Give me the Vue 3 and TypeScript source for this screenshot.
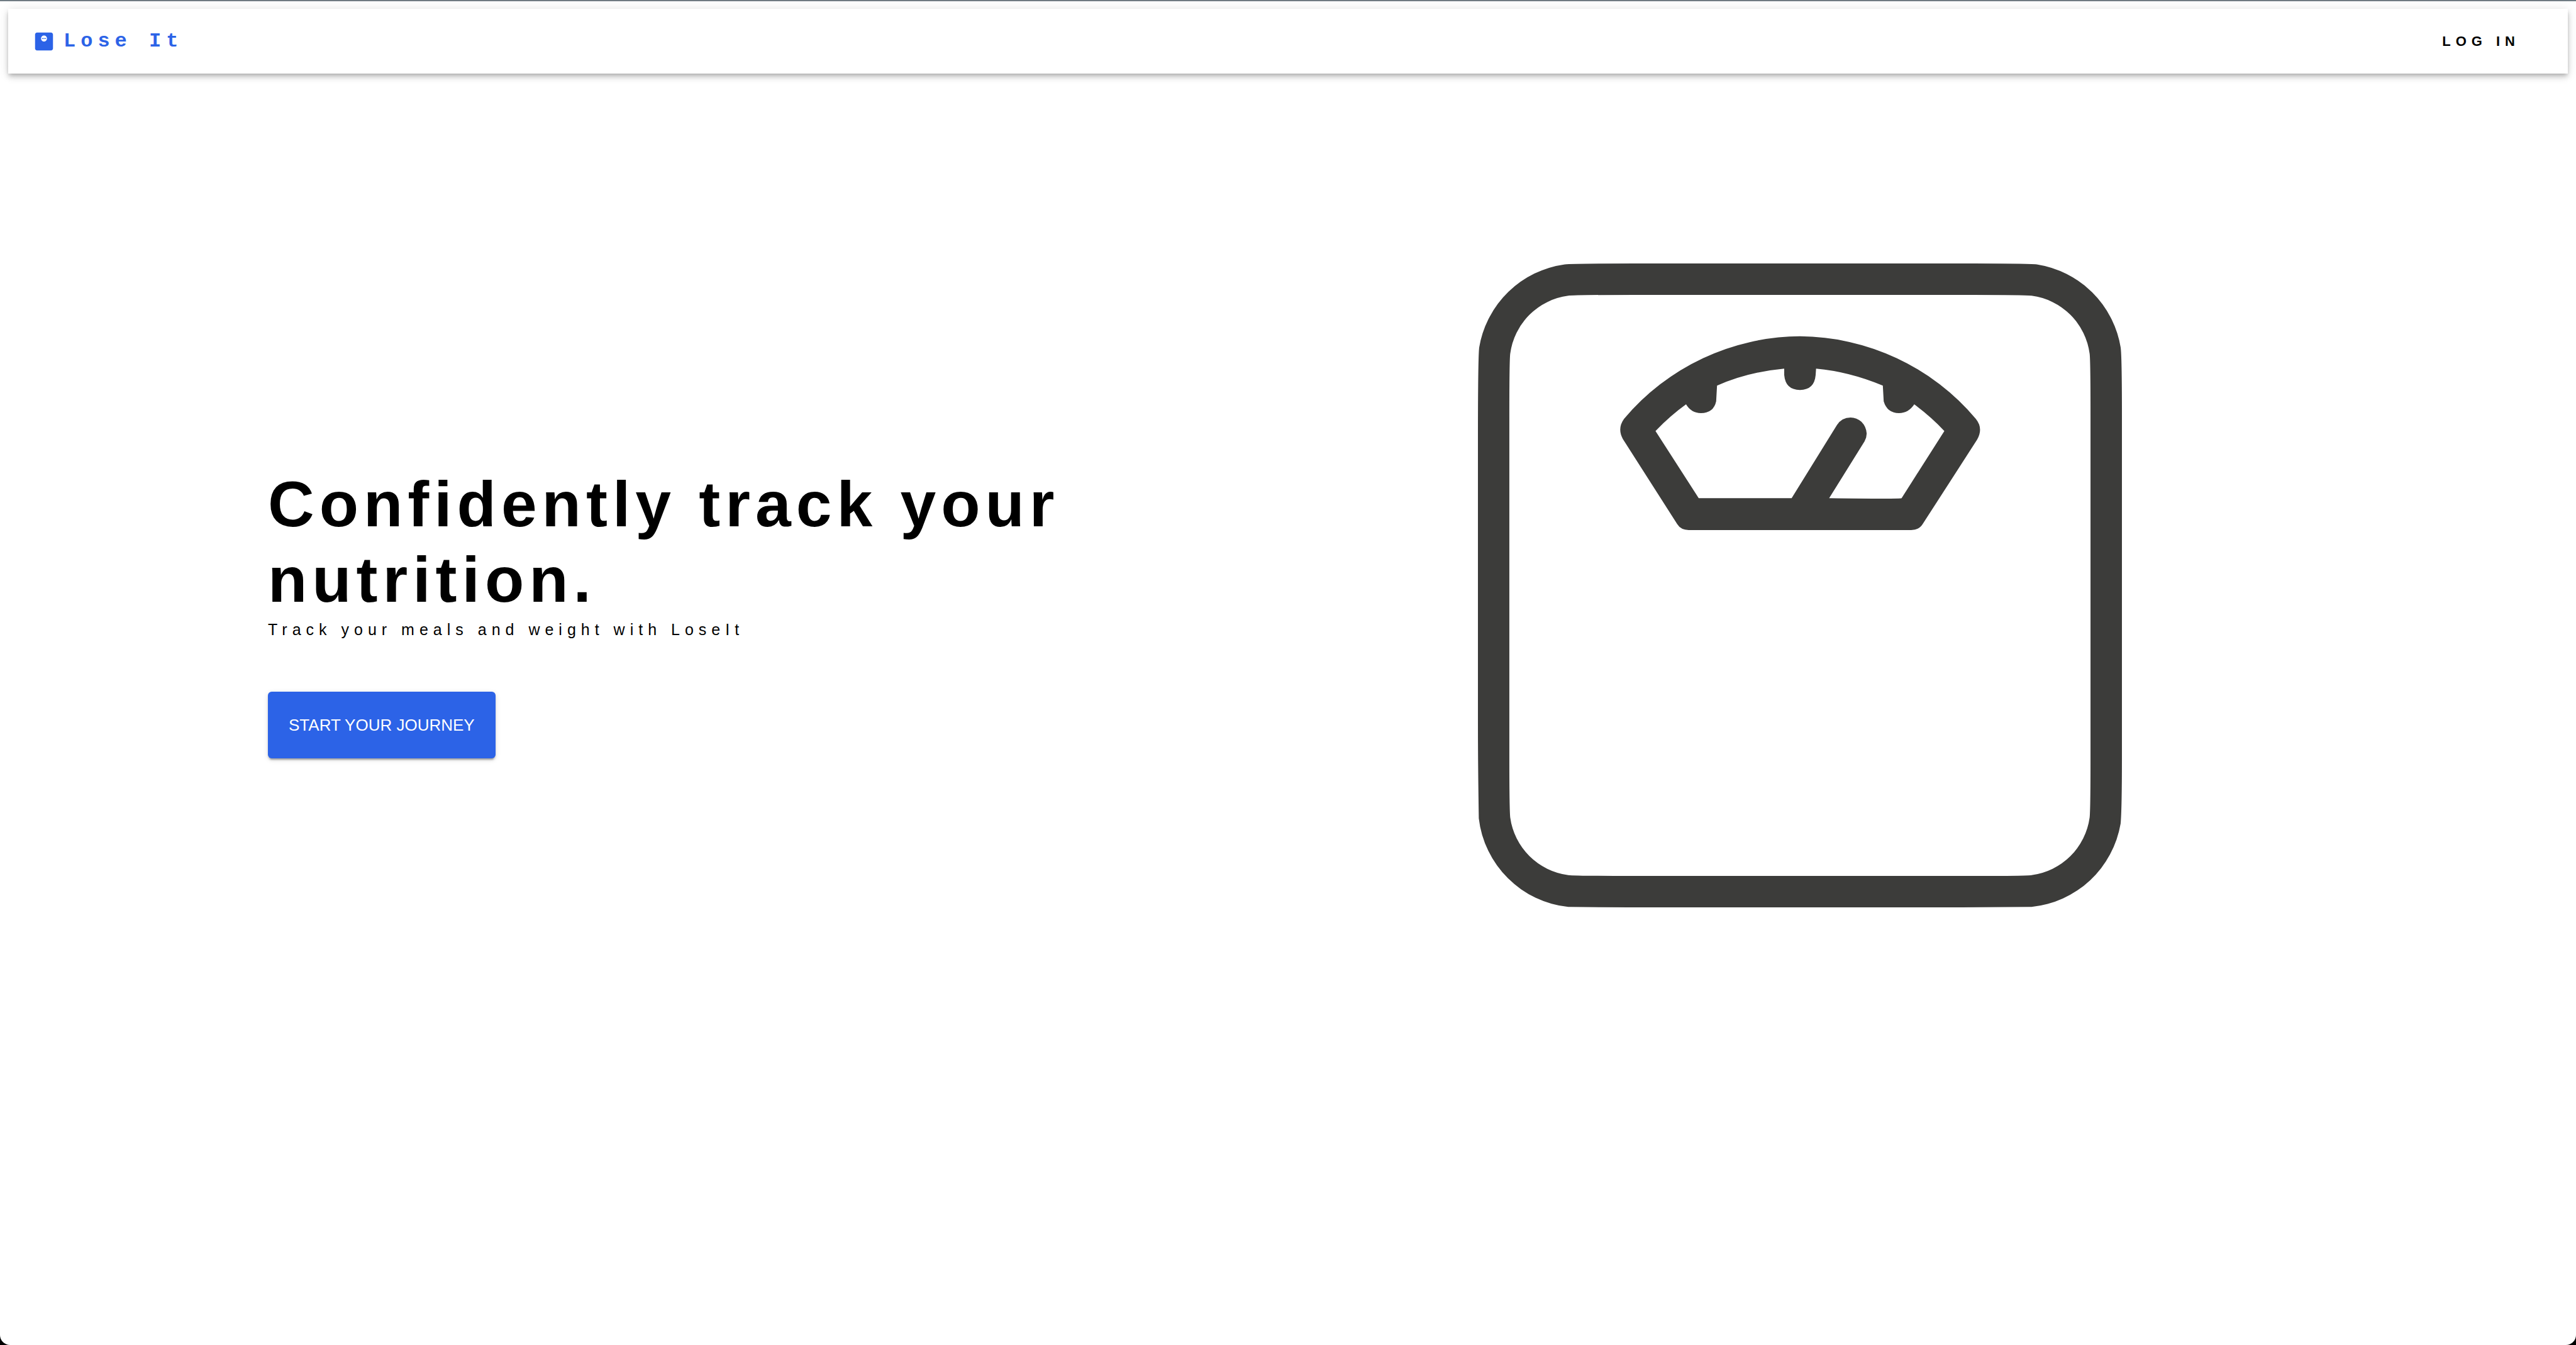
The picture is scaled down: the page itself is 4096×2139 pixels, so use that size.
<script setup lang="ts">
interface NavLink {
  label: string
  href: string
}

const brand: string = 'Lose It'
const links: NavLink[] = [{ label: 'LOG IN', href: '#login' }]
const headline: string = 'Confidently track your nutrition.'
const tagline: string = 'Track your meals and weight with LoseIt'
const action: string = 'START YOUR JOURNEY'
</script>

<template>
  <div class="page">
    <header class="bar">
      <a class="brand" href="#home">
        <svg class="brand-icon" viewBox="0 0 24 24" aria-hidden="true">
          <path
            fill="currentColor"
            fill-rule="evenodd"
            d="M19 3H5c-1.1 0-2 .9-2 2v14c0 1.1.9 2 2 2h14c1.1 0 2-.9 2-2V5c0-1.1-.9-2-2-2zm-7 9c-1.66 0-3-1.34-3-3s1.34-3 3-3 3 1.34 3 3-1.34 3-3 3z"
          />
          <path fill="currentColor" d="M10 8.5h1v1h-1zM11.5 8.5h1v1h-1zM13 8.5h1v1h-1z" />
        </svg>
        <span>{{ brand }}</span>
      </a>
      <nav>
        <a v-for="link in links" :key="link.href" class="nav-link" :href="link.href">{{ link.label }}</a>
      </nav>
    </header>

    <main class="hero">
      <section class="intro">
        <h1>{{ headline }}</h1>
        <p>{{ tagline }}</p>
        <button type="button">{{ action }}</button>
      </section>
      <div class="art">
        <svg viewBox="43 50 1476 1476" role="img" aria-label="Bathroom scale">
          <g fill="#3c3c3a" fill-rule="evenodd">
            <path
              d="M242 52Q262 50 400 50H1180Q1300 50 1324 52A231 231 0 0 1 1516 242Q1519 262 1519 400V1180Q1519 1300 1516 1334A231 231 0 0 1 1312 1525Q1200 1526 1100 1526H460Q360 1526 250 1525A231 231 0 0 1 45 1322Q43 1200 43 1100V460Q43 262 46 242A231 231 0 0 1 242 52Z
                 M250 124A154 154 0 0 0 117 257Q115 272 115 400V1180Q115 1300 117 1320A154 154 0 0 0 250 1452Q270 1454 400 1454H1180Q1300 1454 1312 1452A154 154 0 0 0 1445 1320Q1447 1300 1447 1180V400Q1447 272 1445 257A154 154 0 0 0 1312 124Q1290 122 1180 122H400Q262 122 250 124Z"
            />
            <path
              d="M378 406A531 531 0 0 1 781 217A531 531 0 0 1 1184 406Q1202 428 1187 454L1062 648Q1054 661 1036 661H526Q508 661 500 648L375 452Q362 428 378 406Z
                 M450 434L549 588H762L866 420Q877 403 897 403Q911 403 922 413Q933 424 934 440Q934 449 929 458L848 588Q1010 590 1014 588L1112 434Q1080 400 1043 373Q1030 393 1008 393Q981 393 973 366L971 330Q895 298 818 291L817 306Q814 340 781 340Q748 340 745 306V291Q660 299 591 330L589 366Q583 393 554 393Q532 393 520 373Q485 398 450 434Z"
            />
          </g>
        </svg>
      </div>
    </main>
  </div>
</template>

<style>
html,
body {
  margin: 0;
  background: #000;
}
</style>

<style scoped>
.page {
  box-sizing: border-box;
  min-height: 100vh;
  padding: 12px 13px;
  border-top: 2px solid #707b83;
  border-radius: 0 0 16px 16px;
  background: #fff;
  color: #000;
  font-family: Helvetica, 'Liberation Sans', Arial, sans-serif;
  letter-spacing: 8px;
}

.bar {
  display: flex;
  align-items: center;
  justify-content: space-between;
  box-sizing: border-box;
  height: 103px;
  padding: 0 38px;
  background: #fff;
  box-shadow:
    0 3px 6px -2px rgba(0, 0, 0, 0.2),
    0 6px 8px rgba(0, 0, 0, 0.14),
    0 2px 16px rgba(0, 0, 0, 0.12);
}

.brand {
  display: flex;
  align-items: center;
  gap: 12px;
  color: #2c63e7;
  font-family: 'Courier New', 'Liberation Mono', monospace;
  font-size: 32px;
  font-weight: 700;
  line-height: 52px;
  text-decoration: none;
}

.brand-icon {
  width: 38px;
  height: 38px;
}

.nav-link {
  padding: 0 38px;
  color: inherit;
  font-size: 22px;
  font-weight: 700;
  line-height: 38px;
  text-decoration: none;
}

.hero {
  display: grid;
  grid-template-columns: 1fr 1fr;
  gap: 12px;
  align-items: start;
  padding: 302px 413px 0;
}

.intro {
  padding-top: 323px;
}

h1 {
  margin: 0;
  font-size: 102px;
  font-weight: 700;
  line-height: 120px;
}

p {
  margin: 0 0 80px;
  font-size: 25px;
  line-height: 38px;
}

button {
  display: block;
  height: 106px;
  padding: 0 33px;
  border: 0;
  border-radius: 6px;
  background: #2c63e7;
  color: #fff;
  font-family: inherit;
  font-size: 26px;
  letter-spacing: normal;
  box-shadow:
    0 5px 2px -3px rgba(0, 0, 0, 0.2),
    0 3px 3px rgba(0, 0, 0, 0.14),
    0 2px 8px rgba(0, 0, 0, 0.12);
}

.art {
  display: flex;
  justify-content: center;
}

.art svg {
  width: 100%;
  max-width: 1024px;
  height: auto;
}
</style>
